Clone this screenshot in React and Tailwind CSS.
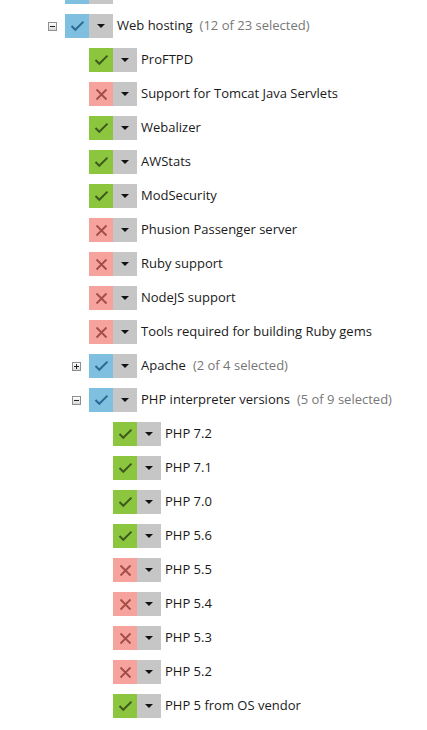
import React from 'react';

const Check = ({ color }) => (
  <svg width="15" height="12" viewBox="0 0 15 12">
    <path d="M1.5 6 L5.3 9.8 L13.5 1.6" fill="none" stroke={color} strokeWidth="2" />
  </svg>
);

const Cross = () => (
  <svg width="13" height="13" viewBox="0 0 13 13">
    <path d="M1.5 1.5 L11.5 11.5 M11.5 1.5 L1.5 11.5" fill="none" stroke="#a44c47" strokeWidth="1.8" />
  </svg>
);

const Caret = () => (
  <svg width="8" height="4" viewBox="0 0 8 4">
    <path d="M0 0 H8 L4 4 Z" fill="#111" />
  </svg>
);

const Expander = ({ open }) => (
  <div className="w-[9px] h-[9px] border border-[#8e8e8e] bg-gradient-to-b from-white to-[#d8d8d8] flex items-center justify-center">
    <div className="relative w-[5px] h-[1px] bg-[#222]">
      {!open && <div className="absolute left-[2px] top-[-2px] w-[1px] h-[5px] bg-[#222]" />}
    </div>
  </div>
);

const Toggle = ({ state }) => {
  const box =
    state === 'partial'
      ? 'bg-[#7fbfdf]'
      : state === 'on'
      ? 'bg-[#8cc63e]'
      : 'bg-[#f7a39d]';
  return (
    <div className="flex h-6 shrink-0">
      <div className={`w-6 h-6 flex items-center justify-center ${box}`}>
        {state === 'partial' && <Check color="#2a6a95" />}
        {state === 'on' && <Check color="#3d5a1e" />}
        {state === 'off' && <Cross />}
      </div>
      <div className="w-6 h-6 bg-[#c6c6c6] flex items-center justify-center">
        <Caret />
      </div>
    </div>
  );
};

const Row = ({ indent, state, label, count, expander }) => (
  <div className="h-[34px] flex items-center" style={{ paddingLeft: indent }}>
    {expander !== undefined && (
      <div className="w-[17px] flex items-center">
        <Expander open={expander === 'open'} />
      </div>
    )}
    <Toggle state={state} />
    <span className="ml-1 text-[13px] text-[#1a1a1a] whitespace-nowrap">{label}</span>
    {count && <span className="ml-[7px] text-[13px] text-[#777] whitespace-nowrap">{count}</span>}
  </div>
);

const webHosting = [
  ['on', 'ProFTPD'],
  ['off', 'Support for Tomcat Java Servlets'],
  ['on', 'Webalizer'],
  ['on', 'AWStats'],
  ['on', 'ModSecurity'],
  ['off', 'Phusion Passenger server'],
  ['off', 'Ruby support'],
  ['off', 'NodeJS support'],
  ['off', 'Tools required for building Ruby gems'],
];

const php = [
  ['on', 'PHP 7.2'],
  ['on', 'PHP 7.1'],
  ['on', 'PHP 7.0'],
  ['on', 'PHP 5.6'],
  ['off', 'PHP 5.5'],
  ['off', 'PHP 5.4'],
  ['off', 'PHP 5.3'],
  ['off', 'PHP 5.2'],
  ['on', 'PHP 5 from OS vendor'],
];

const App = () => {
  return (
    <div className="w-[427px] h-[730px] overflow-hidden bg-white" style={{ fontFamily: '"Open Sans", "Liberation Sans", sans-serif' }}>
      <div className="-mt-[25px]">
        <Row indent={65} state="partial" label="" />
        <Row indent={48} expander="open" state="partial" label="Web hosting" count="(12 of 23 selected)" />
        {webHosting.map(([s, l]) => (
          <Row key={l} indent={89} state={s} label={l} />
        ))}
        <Row indent={72} expander="closed" state="partial" label="Apache" count="(2 of 4 selected)" />
        <Row indent={72} expander="open" state="partial" label="PHP interpreter versions" count="(5 of 9 selected)" />
        {php.map(([s, l]) => (
          <Row key={l} indent={113} state={s} label={l} />
        ))}
      </div>
    </div>
  );
};

export default App;
